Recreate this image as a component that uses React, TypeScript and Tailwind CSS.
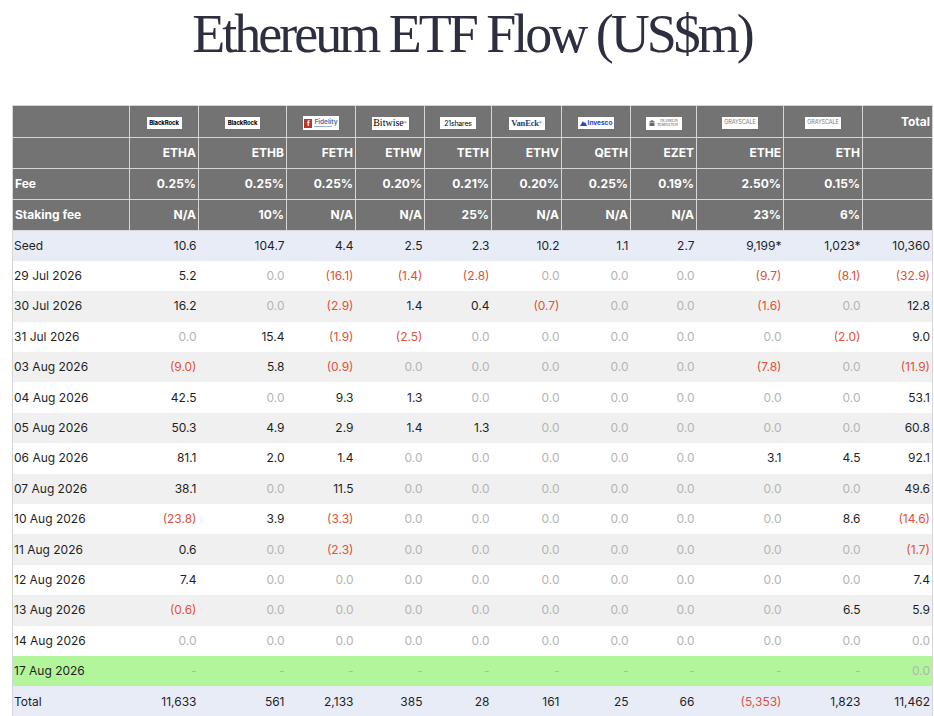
import React from "react";

// ETF columns, in the order of the sheet
const funds = ["ETHA", "ETHB", "FETH", "ETHW", "TETH", "ETHV", "QETH", "EZET", "ETHE", "ETH"];
const fees = ["0.25%", "0.25%", "0.25%", "0.20%", "0.21%", "0.20%", "0.25%", "0.19%", "2.50%", "0.15%"];
const stakingFees = ["N/A", "10%", "N/A", "N/A", "25%", "N/A", "N/A", "N/A", "23%", "6%"];
const colWidths = [117, 69, 88, 69, 69, 67, 70, 69, 66, 87, 79, 70];

const z = "0.0";
const flows: { label: string; values: string[]; kind?: "seed" | "today" | "total" }[] = [
  { label: "Seed", kind: "seed", values: ["10.6", "104.7", "4.4", "2.5", "2.3", "10.2", "1.1", "2.7", "9,199*", "1,023*", "10,360"] },
  { label: "29 Jul 2026", values: ["5.2", z, "(16.1)", "(1.4)", "(2.8)", z, z, z, "(9.7)", "(8.1)", "(32.9)"] },
  { label: "30 Jul 2026", values: ["16.2", z, "(2.9)", "1.4", "0.4", "(0.7)", z, z, "(1.6)", z, "12.8"] },
  { label: "31 Jul 2026", values: [z, "15.4", "(1.9)", "(2.5)", z, z, z, z, z, "(2.0)", "9.0"] },
  { label: "03 Aug 2026", values: ["(9.0)", "5.8", "(0.9)", z, z, z, z, z, "(7.8)", z, "(11.9)"] },
  { label: "04 Aug 2026", values: ["42.5", z, "9.3", "1.3", z, z, z, z, z, z, "53.1"] },
  { label: "05 Aug 2026", values: ["50.3", "4.9", "2.9", "1.4", "1.3", z, z, z, z, z, "60.8"] },
  { label: "06 Aug 2026", values: ["81.1", "2.0", "1.4", z, z, z, z, z, "3.1", "4.5", "92.1"] },
  { label: "07 Aug 2026", values: ["38.1", z, "11.5", z, z, z, z, z, z, z, "49.6"] },
  { label: "10 Aug 2026", values: ["(23.8)", "3.9", "(3.3)", z, z, z, z, z, z, "8.6", "(14.6)"] },
  { label: "11 Aug 2026", values: ["0.6", z, "(2.3)", z, z, z, z, z, z, z, "(1.7)"] },
  { label: "12 Aug 2026", values: ["7.4", z, z, z, z, z, z, z, z, z, "7.4"] },
  { label: "13 Aug 2026", values: ["(0.6)", z, z, z, z, z, z, z, z, "6.5", "5.9"] },
  { label: "14 Aug 2026", values: [z, z, z, z, z, z, z, z, z, z, z] },
  { label: "17 Aug 2026", kind: "today", values: ["-", "-", "-", "-", "-", "-", "-", "-", "-", "-", z] },
  { label: "Total", kind: "total", values: ["11,633", "561", "2,133", "385", "28", "161", "25", "66", "(5,353)", "1,823", "11,462"] },
];

function valueColor(v: string) {
  if (v.startsWith("(")) return "text-[#e0503c]";
  if (v === "0.0" || v === "-") return "text-[#b4b4b4]";
  return "text-[#1f1f1f]";
}

function LogoBox({ w = 35, h = 12, children }: { w?: number; h?: number; children: React.ReactNode }) {
  return (
    <div
      className="mx-auto flex items-center justify-center overflow-hidden bg-white font-normal leading-none"
      style={{ width: w, height: h }}
    >
      {children}
    </div>
  );
}

function Logo({ fund }: { fund: string }) {
  switch (fund) {
    case "ETHA":
    case "ETHB":
      return (
        <LogoBox w={35} h={12}>
          <span className="text-[6px] font-bold tracking-[-0.02em] text-black">BlackRock</span>
        </LogoBox>
      );
    case "FETH":
      return (
        <LogoBox w={36} h={14}>
          <div className="flex items-center gap-[2px]">
            <span className="flex h-[9px] w-[8px] items-center justify-center bg-[#b8372b] text-[7px] font-bold text-white">f</span>
            <div className="flex flex-col">
              <span className="text-[6.5px] font-semibold text-[#3f6fa8]">Fidelity</span>
              <span className="mt-[1px] h-[1px] w-[18px] bg-[#9bb2cf]" />
            </div>
          </div>
        </LogoBox>
      );
    case "ETHW":
      return (
        <LogoBox w={37} h={13}>
          <span className="font-['Liberation_Serif',serif] text-[10px] text-black">
            Bitwise<sup className="text-[4px]">®</sup>
          </span>
        </LogoBox>
      );
    case "TETH":
      return (
        <LogoBox w={36} h={12}>
          <span className="text-[7px] tracking-[-0.03em] text-black">21shares</span>
        </LogoBox>
      );
    case "ETHV":
      return (
        <LogoBox w={36} h={13}>
          <span className="font-['Liberation_Serif',serif] text-[8.5px] font-bold tracking-[-0.02em] text-[#1d3b7c]">
            VanEck<sup className="text-[4px]">®</sup>
          </span>
        </LogoBox>
      );
    case "QETH":
      return (
        <LogoBox w={36} h={12}>
          <div className="flex items-center gap-[1px]">
            <svg width="7" height="5" viewBox="0 0 7 5">
              <path d="M0 5 L3 0 L4 2 L5 1 L7 5 Z" fill="#2547c4" />
            </svg>
            <span className="text-[6.5px] font-bold text-[#2547c4]">Invesco</span>
          </div>
        </LogoBox>
      );
    case "EZET":
      return (
        <LogoBox w={36} h={13}>
          <div className="flex items-center gap-[2px]">
            <svg width="6" height="6" viewBox="0 0 6 6">
              <path d="M0 2 L3 0 L6 2 Z M0.5 2.5 H5.5 V6 H0.5 Z" fill="#6b6b6b" />
            </svg>
            <div className="flex flex-col font-['Liberation_Serif',serif] text-[3.5px] leading-[4px] text-[#555]">
              <span>FRANKLIN</span>
              <span>TEMPLETON</span>
            </div>
          </div>
        </LogoBox>
      );
    default:
      return (
        <LogoBox w={36} h={12}>
          <span className="text-[5.5px] tracking-[-0.02em] text-[#7a7a7a]">GRAYSCALE</span>
        </LogoBox>
      );
  }
}

const headBase = "border border-[#d6d6d6] bg-[#737373] px-[2px] text-[12px] font-bold text-white";
const headCell = headBase + " text-right";
const headLabel = headBase + " text-left";

export default function App() {
  return (
    <div className="min-h-screen bg-white font-['Inter','Liberation_Sans',sans-serif]">
      <div className="ml-[12px] w-[920px]">
        <h1 className="mb-[44px] pt-[7px] text-center font-['Liberation_Serif',serif] text-[54px] leading-[54px] tracking-[-3px] text-[#2d2e3f]">
          Ethereum ETF Flow (US$m)
        </h1>

        <table className="w-[920px] table-fixed border-collapse">
          <colgroup>
            {colWidths.map((w, i) => (
              <col key={i} style={{ width: w }} />
            ))}
          </colgroup>
          <thead>
            <tr className="h-[32px]">
              <th className={headCell}></th>
              {funds.map((f) => (
                <th key={f} className={headCell + " pt-[3px]"}>
                  <Logo fund={f} />
                </th>
              ))}
              <th className={headCell}>Total</th>
            </tr>
            <tr className="h-[31px]">
              <th className={headCell}></th>
              {funds.map((f) => (
                <th key={f} className={headCell}>
                  {f}
                </th>
              ))}
              <th className={headCell}></th>
            </tr>
            <tr className="h-[31px]">
              <th className={headLabel}>Fee</th>
              {fees.map((f, i) => (
                <th key={i} className={headCell}>
                  {f}
                </th>
              ))}
              <th className={headCell}></th>
            </tr>
            <tr className="h-[31px]">
              <th className={headLabel}>Staking fee</th>
              {stakingFees.map((f, i) => (
                <th key={i} className={headCell}>
                  {f}
                </th>
              ))}
              <th className={headCell}></th>
            </tr>
          </thead>
          <tbody>
            {flows.map((row, r) => {
              let bg = r % 2 === 0 ? "bg-[#f0f0f0]" : "bg-white";
              if (row.kind === "seed" || row.kind === "total") bg = "bg-[#e8ecf7]";
              if (row.kind === "today") bg = "bg-[#b3f59b]";
              return (
                <tr key={row.label} className={"h-[30.4px] " + bg}>
                  <td className="border-l border-[#d6d6d6] pl-[1px] text-left text-[12px] text-[#1f1f1f]">{row.label}</td>
                  {row.values.map((v, i) => (
                    <td
                      key={i}
                      className={
                        "pr-[2px] text-right text-[12px] " +
                        valueColor(v) +
                        (i === row.values.length - 1 ? " border-r border-[#d6d6d6]" : "")
                      }
                    >
                      {v}
                    </td>
                  ))}
                </tr>
              );
            })}
          </tbody>
        </table>
      </div>
    </div>
  );
}
